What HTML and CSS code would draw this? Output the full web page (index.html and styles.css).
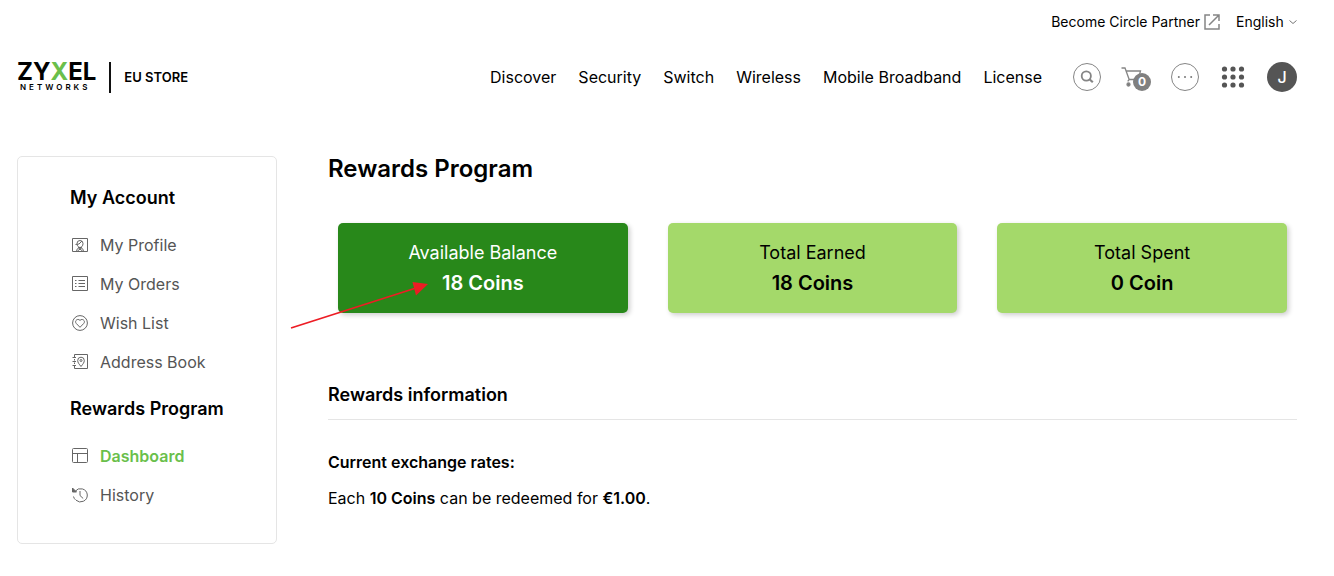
FILE: index.html
```html
<!DOCTYPE html>
<html lang="en">
<head>
<meta charset="utf-8">
<meta name="viewport" content="width=device-width, initial-scale=1">
<title>Rewards Program</title>
<link rel="stylesheet" href="styles.css">
</head>
<body>
<header class="header">
  <div class="topbar">
    <a class="partner" href="#">Become Circle Partner
      <svg class="partner-icon" viewBox="0 0 16 16" fill="none" stroke="#858585" stroke-width="1.5"><path d="M6 1H1v14h14v-5M9 1h6v6M15 1 5 11"/></svg>
    </a>
    <div class="language">
      <select class="language-select" aria-label="Language"><option>English</option></select>
      <svg class="language-icon" viewBox="0 0 8 8" fill="none" stroke="#777"><path d="m.5 2.5 3.5 3 3.5-3"/></svg>
    </div>
  </div>
  <div class="mainbar">
    <a class="logo" href="#">
      <span class="brand"><span class="brand-name">ZY<span class="brand-x">X</span>EL</span><span class="brand-sub">NETWORKS</span></span>
      <span class="store">EU STORE</span>
    </a>
    <nav class="nav" aria-label="Main">
      <a href="#">Discover</a><a href="#">Security</a><a href="#">Switch</a><a href="#">Wireless</a><a href="#">Mobile Broadband</a><a href="#">License</a>
    </nav>
    <div class="tools">
      <button class="tool" type="button" aria-label="Search">
        <svg viewBox="0 0 28 28" width="28" height="28" fill="none" stroke="#858585"><circle cx="14" cy="14" r="13.5"/><circle cx="13.3" cy="13" r="4.6" stroke-width="1.8"/><path d="m16.5 16.3 3.3 3" stroke-width="2.2"/></svg>
      </button>
      <button class="tool cart" type="button" aria-label="Cart">
        <svg viewBox="0 0 30 28" width="30" height="28" fill="none" stroke="#858585" stroke-width="1.3"><path d="M.5 5H4l4.2 11.5h9L19.5 8H5M8.2 16.5l-1.5 1.8"/><circle cx="7.5" cy="21.5" r="1.5" fill="#777"/></svg>
        <span class="badge">0</span>
      </button>
      <button class="tool" type="button" aria-label="More">
        <svg viewBox="0 0 28 28" width="28" height="28"><circle cx="14" cy="14" r="13.5" fill="none" stroke="#858585"/><g fill="#777"><circle cx="7.8" cy="14" r="1"/><circle cx="14" cy="14" r="1"/><circle cx="20.2" cy="14" r="1"/></g></svg>
      </button>
      <button class="tool apps" type="button" aria-label="Apps">
        <svg viewBox="0 0 24 24" width="24" height="24" fill="#555"><circle cx="3.5" cy="4" r="2.6"/><circle cx="12" cy="4" r="2.6"/><circle cx="20.5" cy="4" r="2.6"/><circle cx="3.5" cy="12" r="2.6"/><circle cx="12" cy="12" r="2.6"/><circle cx="20.5" cy="12" r="2.6"/><circle cx="3.5" cy="20" r="2.6"/><circle cx="12" cy="20" r="2.6"/><circle cx="20.5" cy="20" r="2.6"/></svg>
      </button>
      <button class="avatar" type="button">J</button>
    </div>
  </div>
</header>
<div class="page">
  <aside class="sidebar">
    <h2 class="side-title">My Account</h2>
    <ul class="menu">
      <li><a href="#"><svg class="icon" viewBox="0 0 16 16"><path d="M.5 1.5h15v13H.5zM4.500 14.500c.3-2.500 1.500-4 3.500-4s3.200 1.500 3.500 4M5 6.500a3 3 0 0 1 6 0c0 2.500-1.500 4-3 4s-3-1.500-3-4M3.500 7.500 7 7l3-3M6 10.500l4.500 3.500M10 10.500l-4.500 3.500"/></svg>My Profile</a></li>
      <li><a href="#"><svg class="icon" viewBox="0 0 16 16"><path d="M.5.5h15v14H.5zM3 4.500h1.500M3 7.500h1.500M3 10.500h1.500M6.500 4.500H13M6.500 7.500H13M6.500 10.500H13"/></svg>My Orders</a></li>
      <li><a href="#"><svg class="icon" viewBox="0 0 16 16"><circle cx="8" cy="8" r="7.400"/><path d="M8 12.300 4.300 8.500C2 5.800 5.800 2.900 8 5.400c2.200-2.500 6 .4 3.700 3.100z"/></svg>Wish List</a></li>
      <li><a href="#"><svg class="icon" viewBox="0 0 16 16"><path d="M2.500 3V.5h13v14h-13V12M2.500 5v1.500M2.500 8.500V10M.5 3.500h3.500M.5 7.500h3.500M.5 11.500h3.500M9 12.500C7 10 5.700 8.500 5.700 6.500a3.300 3.300 0 0 1 6.600 0c0 2-1.300 3.500-3.300 6z"/><circle cx="9" cy="6.500" r="1"/></svg>Address Book</a></li>
    </ul>
    <h2 class="side-title">Rewards Program</h2>
    <ul class="menu">
      <li><a class="current" href="#" aria-current="page"><svg class="icon" viewBox="0 0 16 16"><rect x=".5" y=".5" width="15" height="14" rx="1"/><path d="M.5 5.500h15M5.500 5.500v9"/></svg>Dashboard</a></li>
      <li><a href="#"><svg class="icon" viewBox="0 0 16 16"><path d="M3 4.500A6.800 6.800 0 0 1 15.300 8 6.800 6.800 0 0 1 4 13.200M1.500 9.500c.4 1.500 1 2.500 2 3.300M8 4v4.500l3.200 3"/><path d="M.5 1v4h4z" fill="#666"/></svg>History</a></li>
    </ul>
  </aside>
  <main class="content">
    <h1 class="title">Rewards Program</h1>
    <div class="cards">
      <section class="card card-primary"><span class="card-label">Available Balance</span><strong class="card-value">18 Coins</strong>
        <svg class="arrow" viewBox="0 0 138 48" aria-hidden="true"><path d="M1 46 126 6" stroke="#ed1c24" stroke-width="1.700"/><path d="m122.500 0 15.500 2-12 11.500z" fill="#ed1c24"/></svg>
      </section>
      <section class="card"><span class="card-label">Total Earned</span><strong class="card-value">18 Coins</strong></section>
      <section class="card"><span class="card-label">Total Spent</span><strong class="card-value">0 Coin</strong></section>
    </div>
    <h2 class="info-title">Rewards information</h2>
    <h3 class="rates-title">Current exchange rates:</h3>
    <p class="rates">Each <strong>10 Coins</strong> can be redeemed for <strong>€1.00</strong>.</p>
  </main>
</div>
</body>
</html>
```

FILE: styles.css
```css
* { box-sizing: border-box; }
body { margin: 0; padding: 12px 37px 32px 17px; background: #fff; color: #000; font: 16px/20px Inter, "Liberation Sans", sans-serif; }
h1, h2, h3, p, ul { margin: 0; padding: 0; }
ul { list-style: none; }
a { color: inherit; text-decoration: none; }
button, select { padding: 0; border: 0; background: none; color: inherit; font: inherit; cursor: pointer; }
strong { font-weight: 600; }
svg { display: block; }

.topbar { display: flex; justify-content: flex-end; gap: 16px; font-size: 14px; }
.partner { display: flex; align-items: center; gap: 4px; }
.partner-icon { width: 16px; height: 16px; }
.language { display: flex; align-items: center; gap: 5px; }
.language-select { appearance: none; height: 20px; }
.language-icon { width: 8px; height: 8px; }

.mainbar { display: flex; align-items: center; margin-top: 28px; height: 34px; }
.logo { display: flex; align-items: center; margin-right: auto; }
.brand { display: flex; flex-direction: column; padding-right: 13px; border-right: 2px solid #111; }
.brand-name { font-size: 24px; line-height: 19px; font-weight: 700; }
.brand-sub { padding-left: 3px; font-size: 8px; line-height: 12px; font-weight: 600; letter-spacing: 3px; }
.brand-x { color: #6abf4b; }
.store { padding-left: 13px; font-size: 13px; font-weight: 600; }
.nav { display: flex; gap: 22px; }
.tools { display: flex; align-items: center; gap: 20px; margin-left: 31px; }
.tool { position: relative; }
.apps { margin: 0 2px; }
.badge { position: absolute; right: 0; bottom: 0; width: 18px; height: 18px; border-radius: 50%; background: #808080; color: #fff; font-size: 12px; line-height: 18px; font-weight: 700; }
.avatar { width: 30px; height: 30px; border-radius: 50%; background: #555; color: #fff; font-weight: 500; }

.page { display: flex; align-items: flex-start; gap: 51px; margin-top: 62px; }
.sidebar { flex: 0 0 260px; padding: 29px 20px 13px 52px; border: 1px solid #e5e5e5; border-radius: 5px; }
.side-title { font-size: 18px; line-height: 24px; font-weight: 600; }
.menu { margin: 16px 0 15px; }
.menu a { display: flex; align-items: center; gap: 12px; padding: 9px 2px 10px; color: #555; }
.menu .current { color: #6abf4b; font-weight: 600; }
.icon { width: 16px; height: 16px; fill: none; stroke: #666; }

.content { flex: 1; min-width: 0; }
.title { font-size: 24px; line-height: 26px; font-weight: 600; }
.cards { display: grid; grid-template-columns: repeat(3, 1fr); gap: 40px; margin: 41px 10px 68px; }
.card { position: relative; display: flex; flex-direction: column; align-items: center; padding: 15px 10px; border-radius: 5px; background: #a4d96a; box-shadow: 2px 2px 5px rgba(0, 0, 0, .2); }
.card-primary { background: #28881a; color: #fff; }
.card-label { font-size: 18px; line-height: 30px; }
.card-value { font-size: 20px; line-height: 30px; }
.arrow { position: absolute; left: -48px; top: 59px; width: 138px; height: 48px; }
.info-title { padding-bottom: 10px; border-bottom: 1px solid #e5e5e5; font-size: 18px; line-height: 28px; font-weight: 600; }
.rates-title { margin-top: 32px; font-size: 16px; line-height: 20px; font-weight: 600; }
.rates { margin-top: 16px; }
```
